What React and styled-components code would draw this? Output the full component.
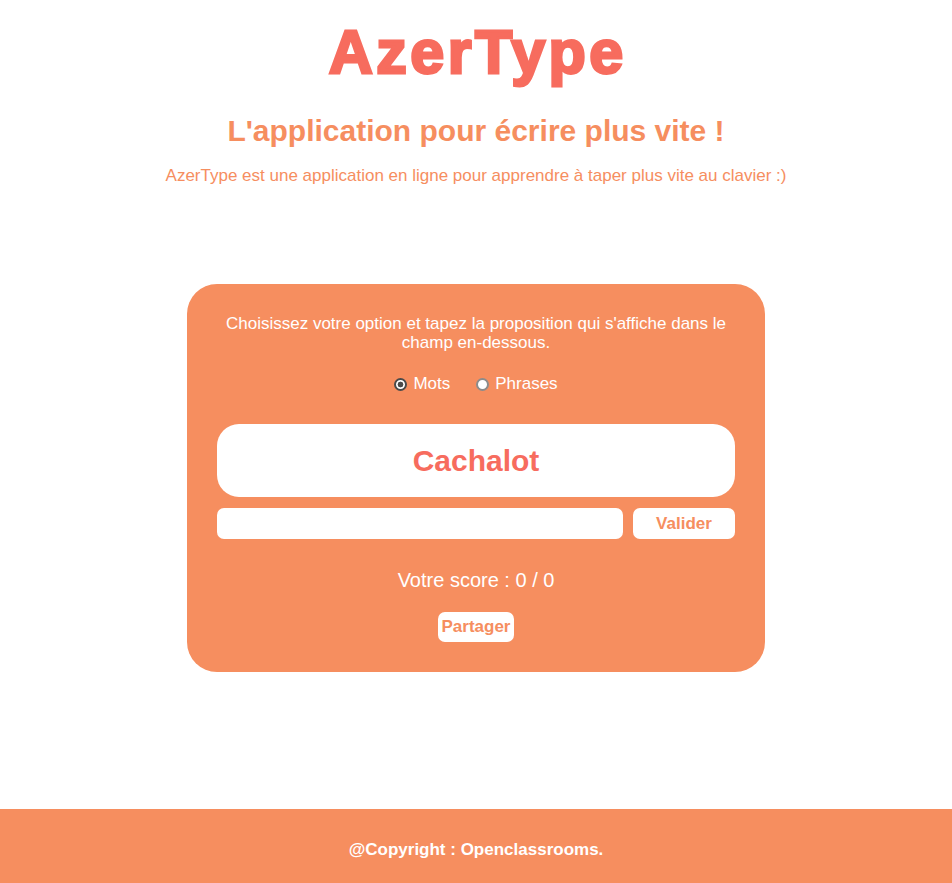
import React, { useState } from "react";
import styled, { createGlobalStyle } from "styled-components";

const ORANGE = "#F68E5F";
const CORAL = "#F76C5E";

const GlobalStyle = createGlobalStyle`
  html, body { margin: 0; padding: 0; }
  body {
    font-family: "Liberation Sans", Arial, sans-serif;
    background: #ffffff;
  }
  * { box-sizing: border-box; }
`;

const Page = styled.div`
  min-height: 100vh;
  display: flex;
  flex-direction: column;
`;

const Main = styled.main`
  flex: 1;
  display: flex;
  flex-direction: column;
  align-items: center;
`;

const Header = styled.header`
  display: flex;
  flex-direction: column;
  align-items: center;
  text-align: center;
`;

const Title = styled.h1`
  margin: 17px 0 0;
  font-size: 61px;
  font-weight: 700;
  line-height: 70px;
  letter-spacing: 3.5px;
  padding-left: 3.5px;
  color: ${CORAL};
  -webkit-text-stroke: 2.8px ${CORAL};
`;

const Subtitle = styled.h2`
  margin: 27px 0 0;
  font-size: 30px;
  font-weight: 700;
  line-height: 34px;
  color: ${ORANGE};
`;

const Intro = styled.p`
  margin: 18px 0 0;
  font-size: 17px;
  line-height: 20px;
  color: ${ORANGE};
`;

const Card = styled.section`
  margin-top: 98px;
  width: 578px;
  background: ${ORANGE};
  border-radius: 30px;
  padding: 30px;
  display: flex;
  flex-direction: column;
  align-items: stretch;
  color: #ffffff;
  text-align: center;
`;

const Instructions = styled.p`
  margin: 0;
  font-size: 17px;
  line-height: 19px;
`;

const RadioRow = styled.div`
  margin-top: 22px;
  display: flex;
  justify-content: center;
  gap: 26px;
  font-size: 17px;
  line-height: 20px;
`;

const RadioLabel = styled.label`
  display: inline-flex;
  align-items: center;
  gap: 6px;
  cursor: pointer;
`;

const RadioInput = styled.input`
  appearance: none;
  margin: 0;
  width: 13px;
  height: 13px;
  border-radius: 50%;
  border: 2px solid ${(p) => (p.checked ? "#4a4a4a" : "#8c8c8c")};
  background: ${(p) =>
    p.checked
      ? "radial-gradient(circle, #4a4a4a 0 2.6px, #ffffff 3.2px)"
      : "#ffffff"};
  cursor: pointer;
`;

const WordBox = styled.div`
  margin-top: 30px;
  height: 73px;
  background: #ffffff;
  border-radius: 22px;
  display: flex;
  align-items: center;
  justify-content: center;
  color: ${CORAL};
  font-size: 30px;
  font-weight: 700;
`;

const InputRow = styled.div`
  margin-top: 11px;
  display: flex;
  gap: 10px;
  height: 31px;
`;

const TextInput = styled.input`
  flex: 1;
  border: none;
  border-radius: 7px;
  background: #ffffff;
  font-family: inherit;
  font-size: 16px;
  padding: 0 8px;
  outline: none;
`;

const Button = styled.button`
  border: none;
  border-radius: 7px;
  background: #ffffff;
  color: ${ORANGE};
  font-family: inherit;
  font-size: 17px;
  font-weight: 700;
  height: ${(p) => p.$h || 31}px;
  width: ${(p) => (p.$w ? `${p.$w}px` : "auto")};
  padding: ${(p) => (p.$w ? "0" : "0 4px")};
  cursor: pointer;
`;

const Score = styled.div`
  margin-top: 30px;
  font-size: 20px;
  line-height: 23px;
`;

const ShareRow = styled.div`
  margin-top: 20px;
  display: flex;
  justify-content: center;
`;

const Footer = styled.footer`
  height: 74px;
  background: ${ORANGE};
  display: flex;
  align-items: center;
  justify-content: center;
  color: #ffffff;
  font-size: 17px;
  font-weight: 700;
  padding-top: 7px;
`;

export default function App() {
  const [mode, setMode] = useState("mots");
  const [value, setValue] = useState("");
  return (
    <>
      <GlobalStyle />
      <Page>
        <Main>
          <Header>
            <Title>AzerType</Title>
            <Subtitle>L'application pour écrire plus vite !</Subtitle>
            <Intro>
              AzerType est une application en ligne pour apprendre à taper plus vite au clavier :)
            </Intro>
          </Header>
          <Card>
            <Instructions>
              Choisissez votre option et tapez la proposition qui s'affiche dans le champ en-dessous.
            </Instructions>
            <RadioRow>
              <RadioLabel>
                <RadioInput
                  type="radio"
                  name="mode"
                  checked={mode === "mots"}
                  onChange={() => setMode("mots")}
                />
                Mots
              </RadioLabel>
              <RadioLabel>
                <RadioInput
                  type="radio"
                  name="mode"
                  checked={mode === "phrases"}
                  onChange={() => setMode("phrases")}
                />
                Phrases
              </RadioLabel>
            </RadioRow>
            <WordBox>Cachalot</WordBox>
            <InputRow>
              <TextInput value={value} onChange={(e) => setValue(e.target.value)} />
              <Button $w={102}>Valider</Button>
            </InputRow>
            <Score>Votre score : 0 / 0</Score>
            <ShareRow>
              <Button $h={30}>Partager</Button>
            </ShareRow>
          </Card>
        </Main>
        <Footer>@Copyright : Openclassrooms.</Footer>
      </Page>
    </>
  );
}
